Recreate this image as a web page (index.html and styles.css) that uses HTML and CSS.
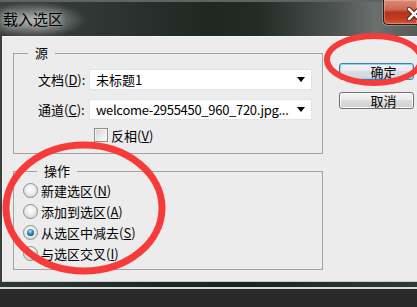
FILE: index.html
```html
<!DOCTYPE html>
<html lang="zh-CN">
<head>
    <meta charset="UTF-8">
    <meta name="viewport" content="width=device-width, initial-scale=1.0">
    <title>载入选区</title>
    <link rel="stylesheet" href="styles.css">
</head>
<body>
    <div class="window">
        <div class="titlebar">
            <span class="title">载入选区</span>
            <span class="close-btn">
                <svg width="14" height="14" viewBox="0 0 14 14">
                    <path d="M2 2 L12 12 M12 2 L2 12" stroke="#3a1510" stroke-width="4.4" stroke-linecap="round"/>
                    <path d="M2 2 L12 12 M12 2 L2 12" stroke="#fff" stroke-width="2.6" stroke-linecap="round"/>
                </svg>
            </span>
        </div>

        <div class="client">
            <div class="dialog">
                <div class="groups">
                    <fieldset class="group source">
                        <legend>源</legend>
                        <div class="field">
                            <label>文档(<u>D</u>):</label>
                            <div class="select"><span>未标题1</span><i class="arrow"></i></div>
                        </div>
                        <div class="field">
                            <label>通道(<u>C</u>):</label>
                            <div class="select"><span class="latin">welcome-2955450_960_720.jpg...</span><i class="arrow"></i></div>
                        </div>
                        <div class="check"><span class="box"></span>反相(<u>V</u>)</div>
                    </fieldset>

                    <fieldset class="group ops">
                        <legend>操作</legend>
                        <div class="radio"><span class="dot"></span>新建选区(<u>N</u>)</div>
                        <div class="radio"><span class="dot"></span>添加到选区(<u>A</u>)</div>
                        <div class="radio on"><span class="dot"></span>从选区中减去(<u>S</u>)</div>
                        <div class="radio"><span class="dot"></span>与选区交叉(<u>I</u>)</div>
                    </fieldset>
                </div>

                <div class="buttons">
                    <button class="btn default">确定</button>
                    <button class="btn">取消</button>
                </div>
            </div>
        </div>

        <div class="frame-bottom"></div>
    </div>

    <!-- red marker circles drawn over the dialog -->
    <svg class="marks" width="417" height="307" viewBox="0 0 417 307">
        <ellipse cx="374" cy="59.5" rx="47" ry="23.5" fill="none" stroke="#f73b3b" stroke-width="6"/>
        <ellipse cx="84" cy="208" rx="78" ry="63" fill="none" stroke="#f73b3b" stroke-width="7"/>
    </svg>
</body>
</html>
```

FILE: styles.css
```css
* {
    box-sizing: border-box;
}
html, body {
    margin: 0;
}
body {
    width: 417px;
    height: 307px;
    overflow: hidden;
    position: relative;
    background: #292929;
    font-family: "Noto Sans CJK SC", sans-serif;
    font-size: 13px;
    color: #000;
}
.window {
    width: 417px;
}
.titlebar {
    height: 36px;
    display: flex;
    align-items: flex-start;
    border-top: 2px solid #5f6462;
    background:
        radial-gradient(ellipse 52px 18px at 34px 18px, rgba(210, 214, 211, 0.75), rgba(210, 214, 211, 0) 100%),
        linear-gradient(to right, #3c413f 0, #323835 20%, #1f2723 50%, #232b27 62%, #4c524f 80%, #6b6f6d 90%, #555a57 100%);
}
.title {
    margin: 8px 0 0 3px;
    font-size: 15px;
    line-height: 18px;
    color: #000;
    text-shadow: 0 0 6px rgba(225, 228, 226, 0.9);
}
.close-btn {
    margin-left: auto;
    margin-top: -2px;
    width: 34px;
    height: 25px;
    padding: 7px 0 0 23px;
    border: 1px solid #2a1a18;
    border-top: none;
    border-right: none;
    border-radius: 0 0 0 5px;
    background: linear-gradient(#d98c78 0, #cc6650 40%, #b5321c 52%, #c53d22 80%, #d4593c 100%);
    box-shadow: inset 0 0 0 1px rgba(255, 220, 210, 0.35), -1px 1px 0 rgba(255, 255, 255, 0.25);
}
.close-btn svg {
    display: block;
}
.client {
    display: flex;
    padding-left: 2px;
    background: #3a403d;
}
.dialog {
    flex: 1;
    display: flex;
    align-items: flex-start;
    background: #ececec;
    border-top: 1px solid #f6f6f6;
    border-left: 1px solid #f2f2f2;
    border-bottom: 1px solid #c9cccb;
    padding: 9px 0 11px 10px;
}
.group {
    width: 310px;
    min-width: 0;
    margin: 0;
    padding: 0;
    border: 1px solid #a2a2a2;
}
.group legend {
    margin-left: 14px;
    padding: 0 7px;
    height: 14px;
    line-height: 14px;
}
.source {
    padding-bottom: 10px;
}
.field {
    display: flex;
    align-items: center;
    padding-left: 24px;
    margin-top: 9px;
}
.field label {
    width: 51px;
    line-height: 16px;
}
.select {
    width: 223px;
    height: 21px;
    display: flex;
    align-items: center;
    padding: 0 6px;
    background: #fff;
    border: 1px solid #dfe5ec;
}
.select span {
    flex: 1;
    line-height: 16px;
    white-space: nowrap;
}
.select .latin {
    letter-spacing: -0.3px;
}
.arrow {
    width: 0;
    height: 0;
    border-left: 4.5px solid transparent;
    border-right: 4.5px solid transparent;
    border-top: 5px solid #000;
}
.check {
    display: flex;
    align-items: center;
    height: 16px;
    margin: 7px 0 0 80px;
}
.box {
    width: 14px;
    height: 14px;
    margin-right: 3px;
    border: 1px solid #8e8f8f;
    background: linear-gradient(135deg, #cfd0d1 0, #e9e9e9 50%, #fdfdfd 100%);
    box-shadow: inset 0 0 0 1px #f2f2f2;
}
.ops {
    margin-top: 10px;
    padding: 2px 0 5px 9px;
}
.radio {
    display: flex;
    align-items: center;
    height: 21px;
}
.dot {
    position: relative;
    width: 15px;
    height: 15px;
    margin-right: 3px;
    border-radius: 50%;
    border: 1px solid #8c8e90;
    background: radial-gradient(circle at 50% 40%, #ffffff 0, #f0f0f0 40%, #c9cacb 100%);
}
.radio.on .dot::after {
    content: "";
    position: absolute;
    left: 3px;
    top: 3px;
    width: 7px;
    height: 7px;
    border-radius: 50%;
    background: radial-gradient(circle at 45% 35%, #c8ecff 0, #3f9bd0 35%, #0e4a72 80%, #0a3450 100%);
}
.buttons {
    display: flex;
    flex-direction: column;
    gap: 12px;
    margin-left: 16px;
    padding-top: 17px;
}
.btn {
    width: 75px;
    height: 17px;
    padding: 0 0 0 14px;
    font-family: inherit;
    font-size: 13px;
    line-height: 15px;
    color: #000;
    border: 1px solid #707070;
    border-radius: 3px;
    background: linear-gradient(#f2f2f2 0, #ebebeb 50%, #dddddd 50%, #cfcfcf 100%);
    box-shadow: inset 0 0 0 1px #fbfbfb;
}
.btn.default {
    border-color: #3c7fb1;
    background: linear-gradient(#f1f4f6 0, #e7eaed 50%, #dadee2 50%, #d3d7db 100%);
    box-shadow: inset 0 0 0 1px #8fd3f5;
}
.frame-bottom {
    height: 7px;
    background: linear-gradient(to right, #2e3935 0, #1d2622 40%, #1b2420 60%, #2f3a36 100%);
    border-bottom: 2px solid #d6dad8;
}
.marks {
    position: absolute;
    left: 0;
    top: 0;
    pointer-events: none;
}
```
